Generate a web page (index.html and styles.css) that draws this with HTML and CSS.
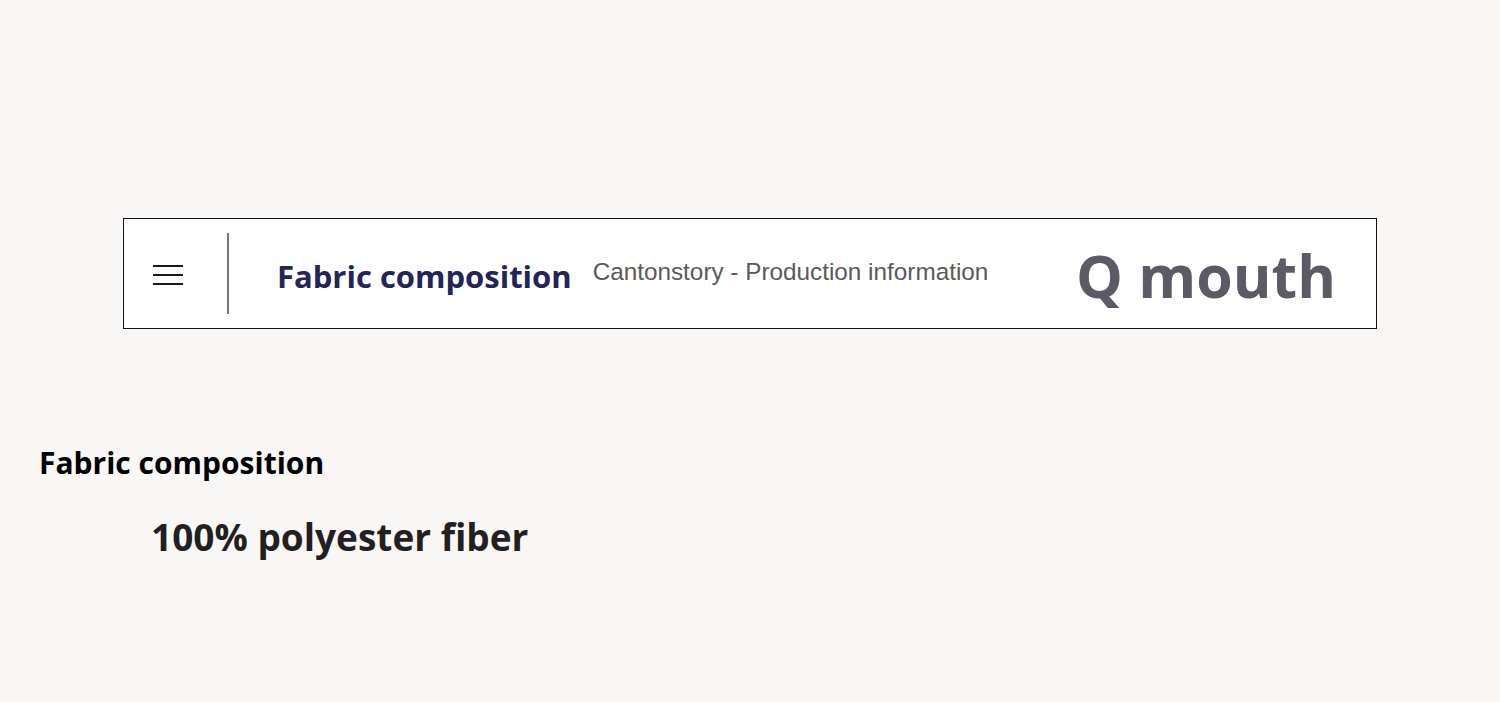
FILE: index.html
```html
<!DOCTYPE html>
<html>
<head>
<meta charset="utf-8">
<link rel="stylesheet" href="styles.css">
</head>
<body>
<div class="page">
  <header class="bar">
    <div class="menu">
      <svg width="30" height="22" viewBox="0 0 30 22"><path d="M0 2H30M0 11H30M0 20H30" stroke="#1a1a1a" stroke-width="1.8" fill="none"/></svg>
    </div>
    <div class="divider"></div>
    <h1 class="title">Fabric composition</h1>
    <p class="sub">Cantonstory - Production information</p>
    <div class="brand">Q mouth</div>
  </header>
  <section class="content">
    <h2 class="label">Fabric composition</h2>
    <p class="value">100% polyester fiber</p>
  </section>
</div>
</body>
</html>
```
FILE: styles.css
```css
html, body { margin: 0; padding: 0; }
body { background: #f8f7f5; width: 1500px; height: 702px; overflow: hidden; font-family: "Open Sans", "Noto Sans", sans-serif; }
.page { padding-top: 218px; }
.bar {
  margin-left: 123px; width: 1252px; height: 109px;
  border: 1px solid #111; background: #fff;
  display: flex; align-items: center;
}
.menu { width: 30px; margin-left: 29px; display: flex; margin-top: 3px; }
.divider { width: 2px; height: 81px; background: #777; margin-left: 44px; }
.title { margin: 4px 0 0 48px; font-size: 31px; font-weight: 700; color: #22245a; }
.sub { margin: -3px 0 0 21px; font-family: "Liberation Sans", Arial, sans-serif; font-size: 24.3px; color: #5a5a5a; }
.brand { margin: 2px 40px 0 auto; font-size: 59px; font-weight: 700; color: #5b5b65; }
.content { padding-top: 110px; }
.label { margin: 0 0 0 39px; font-size: 30px; font-weight: 700; color: #000; line-height: 48px; }
.value { margin: 26px 0 0 151px; font-size: 37px; font-weight: 700; color: #231f20; line-height: 48px; }
```
